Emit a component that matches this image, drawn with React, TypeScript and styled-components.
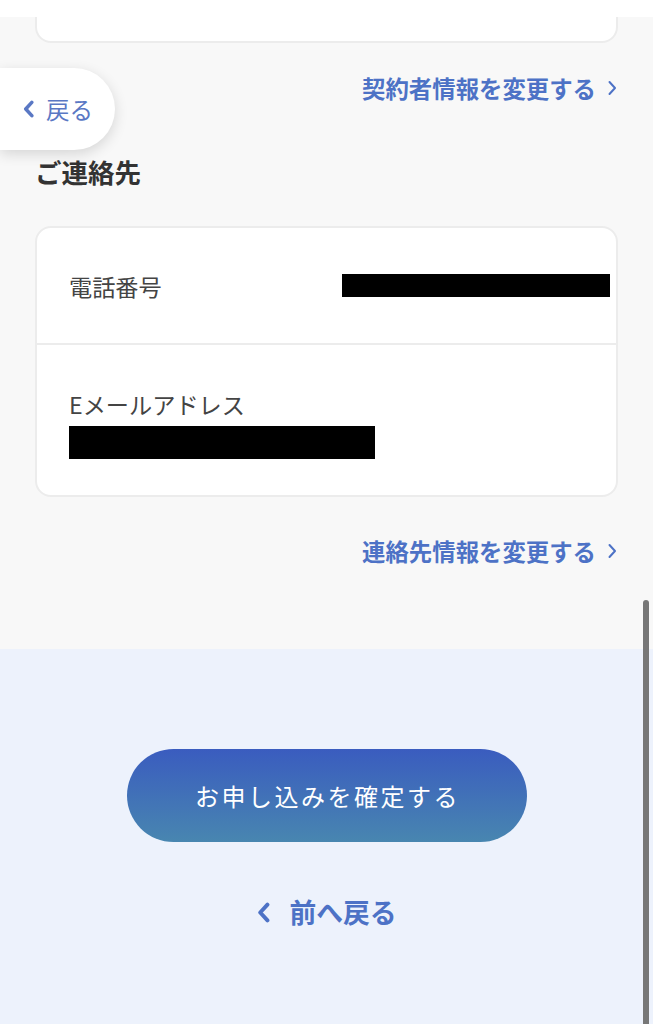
import React from "react";
import styled, { createGlobalStyle } from "styled-components";

const GlobalStyle = createGlobalStyle`
  html, body {
    margin: 0;
    padding: 0;
    background: #f8f8f8;
  }
  body {
    font-family: "Noto Sans CJK JP", "Noto Sans", sans-serif;
    -webkit-font-smoothing: antialiased;
  }
  * { box-sizing: border-box; }
`;

const Page = styled.div`
  position: relative;
  width: 653px;
  height: 1024px;
  overflow: hidden;
  display: flex;
  flex-direction: column;
  background: #f8f8f8;
`;

const TopBar = styled.div`
  height: 17px;
  background: #ffffff;
  flex-shrink: 0;
`;

const Content = styled.div`
  padding: 0 35px 82px 35px;
  display: flex;
  flex-direction: column;
`;

const CardStub = styled.div`
  height: 26px;
  background: #ffffff;
  border: 2px solid #ececec;
  border-top: none;
  border-radius: 0 0 16px 16px;
`;

const LinkRow = styled.div<{ $top: number }>`
  margin-top: ${(p) => p.$top}px;
  display: flex;
  justify-content: flex-end;
`;

const ChangeLink = styled.a`
  display: flex;
  align-items: center;
  gap: 11px;
  font-size: 23.4px;
  line-height: 32px;
  font-weight: 700;
  color: #4d72c6;
  text-decoration: none;
  padding-right: 1px;
`;

const Heading = styled.h2`
  margin: 50px 0 0 0;
  font-size: 26.5px;
  line-height: 36px;
  font-weight: 700;
  color: #333333;
`;

const Card = styled.div`
  margin-top: 36px;
  background: #ffffff;
  border: 2px solid #ececec;
  border-radius: 16px;
  display: flex;
  flex-direction: column;
`;

const PhoneRow = styled.div`
  height: 117px;
  display: flex;
  align-items: center;
  justify-content: space-between;
  padding: 0 6px 0 32px;
  border-bottom: 2px solid #ececec;
`;

const EmailRow = styled.div`
  display: flex;
  flex-direction: column;
  align-items: flex-start;
  padding: 43px 32px 36px 32px;
  gap: 6px;
`;

const Label = styled.span`
  font-size: 23.2px;
  line-height: 32px;
  color: #444444;
  font-weight: 400;
`;

const Redacted = styled.div<{ $w: number; $h: number }>`
  width: ${(p) => p.$w}px;
  height: ${(p) => p.$h}px;
  background: #000000;
`;

const Bottom = styled.div`
  flex: 1;
  background: #edf2fc;
  display: flex;
  flex-direction: column;
  align-items: center;
  padding-top: 100px;
`;

const ConfirmButton = styled.button`
  width: 400px;
  height: 93px;
  border: none;
  border-radius: 47px;
  background: linear-gradient(180deg, #3a5cbf 0%, #4886b0 100%);
  color: #ffffff;
  font-family: "Noto Sans CJK JP", "Noto Sans", sans-serif;
  font-size: 24px;
  letter-spacing: 2.5px;
  font-weight: 400;
  cursor: pointer;
  display: flex;
  align-items: center;
  justify-content: center;
  padding: 0 0 0 2px;
`;

const PrevLink = styled.a`
  margin-top: 52px;
  display: flex;
  align-items: center;
  gap: 18px;
  font-size: 26.8px;
  line-height: 36px;
  font-weight: 700;
  color: #4d72c6;
  text-decoration: none;
`;

const BackPill = styled.a`
  position: absolute;
  left: 0;
  top: 68px;
  width: 115px;
  height: 82px;
  background: #ffffff;
  border-radius: 0 41px 41px 0;
  box-shadow: 0 4px 14px rgba(0, 0, 0, 0.14);
  display: flex;
  align-items: center;
  padding-left: 23px;
  gap: 12px;
  color: #5a78c4;
  font-size: 23.5px;
  line-height: 32px;
  text-decoration: none;
`;

const ScrollBar = styled.div`
  position: absolute;
  left: 643px;
  top: 600px;
  width: 6px;
  height: 430px;
  border-radius: 3px;
  background: #777777;
`;

const ChevronLeft = ({ w, h, sw }: { w: number; h: number; sw: number }) => (
  <svg width={w} height={h} viewBox="0 0 10 16" fill="none">
    <path
      d="M8 2 L2.5 8 L8 14"
      stroke="currentColor"
      strokeWidth={sw}
      strokeLinecap="round"
      strokeLinejoin="round"
    />
  </svg>
);

const ChevronRight = () => (
  <svg width="10" height="16" viewBox="0 0 10 16" fill="none">
    <path
      d="M2.5 2 L8 8 L2.5 14"
      stroke="currentColor"
      strokeWidth={2}
      strokeLinecap="round"
      strokeLinejoin="round"
    />
  </svg>
);

export default function App() {
  return (
    <>
      <GlobalStyle />
      <Page>
        <TopBar />
        <Content>
          <CardStub />
          <LinkRow $top={29}>
            <ChangeLink href="#">
              契約者情報を変更する
              <ChevronRight />
            </ChangeLink>
          </LinkRow>
          <Heading>ご連絡先</Heading>
          <Card>
            <PhoneRow>
              <Label>電話番号</Label>
              <Redacted $w={268} $h={23} />
            </PhoneRow>
            <EmailRow>
              <Label>Eメールアドレス</Label>
              <Redacted $w={306} $h={33} />
            </EmailRow>
          </Card>
          <LinkRow $top={38}>
            <ChangeLink href="#">
              連絡先情報を変更する
              <ChevronRight />
            </ChangeLink>
          </LinkRow>
        </Content>
        <Bottom>
          <ConfirmButton>お申し込みを確定する</ConfirmButton>
          <PrevLink href="#">
            <ChevronLeft w={15} h={21} sw={3} />
            前へ戻る
          </PrevLink>
        </Bottom>
        <BackPill href="#">
          <ChevronLeft w={11} h={18} sw={3.2} />
          戻る
        </BackPill>
        <ScrollBar />
      </Page>
    </>
  );
}
